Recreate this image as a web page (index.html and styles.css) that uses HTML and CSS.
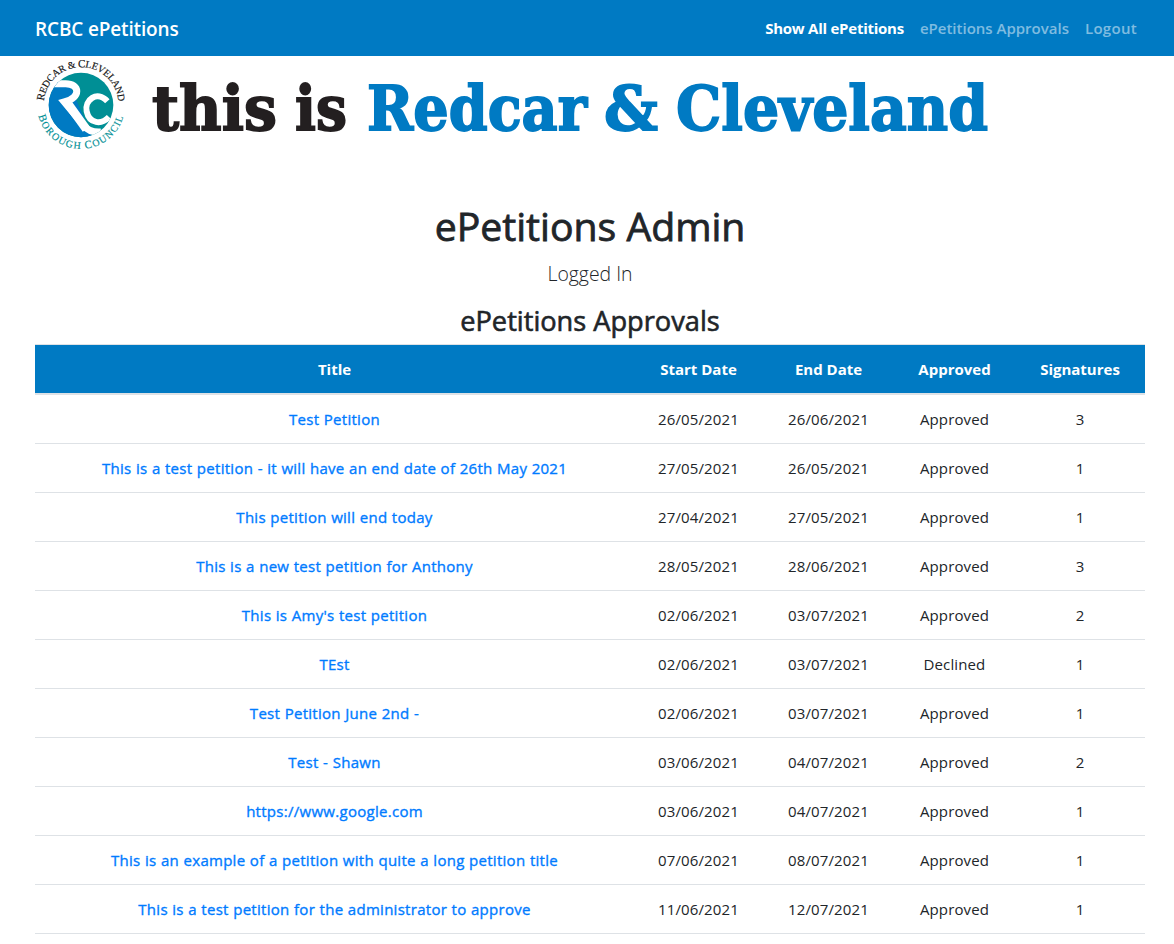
FILE: index.html
```html
<!DOCTYPE html>
<html lang="en">
<head>
<meta charset="utf-8">
<title>RCBC ePetitions</title>
<link rel="stylesheet" href="styles.css">
</head>
<body>
<nav class="navbar">
  <a class="brand">RCBC ePetitions</a>
  <div class="links"><a class="active">Show All ePetitions</a><a>ePetitions Approvals</a><a class="logout">Logout</a></div>
</nav>
<main class="container">
  <svg class="banner" width="960" height="100" viewBox="35 56 960 100" role="img" aria-label="this is Redcar &amp; Cleveland">
    <g transform="translate(25 50) scale(.33333)">
      <defs>
        <clipPath id="disc"><circle cx="168" cy="165" r="97"/></clipPath>
        <path id="arcTop" d="M57 153 A112 112 0 0 1 280 153 L283 190"/>
        <path id="arcBottom" d="M40 197 A132 132 0 0 0 296 197 L300 180"/>
      </defs>
      <g clip-path="url(#disc)">
        <rect x="70" y="60" width="200" height="210" fill="#008f95"/>
        <path d="M60 95 H130 L150 140 L205 270 H60Z" fill="#007ac3"/>
        <path d="M60 60 H125 Q95 72 84 92 H60Z" fill="#fff"/>
        <path d="M60 101 H122 C164 101 170 142 118 156 L176 226 Q194 249 228 246" fill="none" stroke="#fff" stroke-width="21"/>
        <path d="M126 157 L184 238" fill="none" stroke="#fff" stroke-width="26"/>
        <path d="M247 154 C216 120 178 150 185 184 C193 222 229 225 252 201" fill="none" stroke="#fff" stroke-width="18"/>
      </g>
      <text class="seal seal-top"><textPath href="#arcTop" textLength="332"><tspan class="cap">R</tspan>EDCAR &amp; <tspan class="cap">C</tspan>LEVELAND</textPath></text>
      <text class="seal seal-bottom"><textPath href="#arcBottom" textLength="345"><tspan class="cap">B</tspan>OROUGH <tspan class="cap">C</tspan>OUNCIL</textPath></text>
    </g>
    <g class="slogan">
      <text x="152" y="130" textLength="125" lengthAdjust="spacingAndGlyphs">this</text>
      <text x="295" y="130" textLength="52" lengthAdjust="spacingAndGlyphs">is</text>
      <g class="place">
        <text x="367" y="130" textLength="220" lengthAdjust="spacingAndGlyphs">Redcar</text>
        <text x="604" y="130" textLength="54" lengthAdjust="spacingAndGlyphs">&amp;</text>
        <text x="676" y="130" textLength="312" lengthAdjust="spacingAndGlyphs">Cleveland</text>
      </g>
    </g>
  </svg>
  <header class="heading">
    <h1>ePetitions Admin</h1>
    <p>Logged In</p>
    <h2>ePetitions Approvals</h2>
  </header>
  <table class="petitions">
    <colgroup><col class="c-title"><col class="c-start"><col class="c-end"><col class="c-approved"><col class="c-sign"></colgroup>
    <thead><tr><th>Title</th><th>Start Date</th><th>End Date</th><th>Approved</th><th>Signatures</th></tr></thead>
    <tbody>
      <tr><td><a>Test Petition</a></td><td>26/05/2021</td><td>26/06/2021</td><td>Approved</td><td>3</td></tr>
      <tr><td><a>This is a test petition - it will have an end date of 26th May 2021</a></td><td>27/05/2021</td><td>26/05/2021</td><td>Approved</td><td>1</td></tr>
      <tr><td><a>This petition will end today</a></td><td>27/04/2021</td><td>27/05/2021</td><td>Approved</td><td>1</td></tr>
      <tr><td><a>This is a new test petition for Anthony</a></td><td>28/05/2021</td><td>28/06/2021</td><td>Approved</td><td>3</td></tr>
      <tr><td><a>This is Amy's test petition</a></td><td>02/06/2021</td><td>03/07/2021</td><td>Approved</td><td>2</td></tr>
      <tr><td><a>TEst</a></td><td>02/06/2021</td><td>03/07/2021</td><td>Declined</td><td>1</td></tr>
      <tr><td><a>Test Petition June 2nd -</a></td><td>02/06/2021</td><td>03/07/2021</td><td>Approved</td><td>1</td></tr>
      <tr><td><a>Test - Shawn</a></td><td>03/06/2021</td><td>04/07/2021</td><td>Approved</td><td>2</td></tr>
      <tr><td><a>https://www.google.com</a></td><td>03/06/2021</td><td>04/07/2021</td><td>Approved</td><td>1</td></tr>
      <tr><td><a>This is an example of a petition with quite a long petition title</a></td><td>07/06/2021</td><td>08/07/2021</td><td>Approved</td><td>1</td></tr>
      <tr><td><a>This is a test petition for the administrator to approve</a></td><td>11/06/2021</td><td>12/07/2021</td><td>Approved</td><td>1</td></tr>
    </tbody>
  </table>
</main>
</body>
</html>
```
FILE: styles.css
```css
* { box-sizing: border-box; }
body { margin: 0; background: #fff; color: #212529; font: 15px/24px "Open Sans", "Noto Sans", sans-serif; overflow: hidden; }
.navbar { height: 56px; padding: 0 37px 0 35px; background: #007ac3; color: #fff; display: flex; align-items: center; justify-content: space-between; white-space: nowrap; }
.brand { font-size: 19px; font-weight: 600; letter-spacing: -.15px; padding-top: 1px; }
.links { display: flex; gap: 16px; font-weight: 600; color: rgba(255,255,255,.5); }
.links .active { color: #fff; font-weight: 700; letter-spacing: -.25px; }
.links .logout { letter-spacing: .3px; }
.container { padding: 0 29px 0 35px; }
.banner { display: block; overflow: visible; }
.seal { font-family: "Liberation Serif", serif; font-size: 30px; }
.cap { font-size: 33px; }
.seal-top { fill: #111; stroke: #111; stroke-width: .5px; }
.seal-bottom { fill: #008f95; stroke: #008f95; stroke-width: .5px; }
.slogan { font: bold 62px "DejaVu Serif", serif; fill: #231f20; stroke: #231f20; stroke-width: 1.8px; }
.place { fill: #007ac3; stroke: #007ac3; }
.heading { padding-top: 46px; text-align: center; height: 188px; }
h1 { margin: 0; font-size: 39.2px; line-height: 48px; font-weight: 400; -webkit-text-stroke: .8px #212529; }
p { margin: 8px 0 0; font-size: 19.4px; line-height: 31px; font-weight: 300; }
h2 { margin: 15px 0 0; font-size: 27.2px; line-height: 34px; font-weight: 400; -webkit-text-stroke: .6px #212529; }
.petitions { width: 1110px; table-layout: fixed; border-spacing: 0; text-align: center; white-space: nowrap; }
.c-title { width: 599px; }
.c-start { width: 129px; }
.c-end { width: 131px; }
.c-approved { width: 121px; }
.c-sign { width: 130px; }
th { height: 51px; padding: 0; background: #007ac3; color: #fff; border-top: 1px solid #dee2e6; border-bottom: 2px solid #dee2e6; font-weight: 700; }
td { height: 49px; padding: 0; border-bottom: 1px solid #dee2e6; }
td + td { letter-spacing: .12px; }
td a { color: #007bff; letter-spacing: .28px; word-spacing: .3px; -webkit-text-stroke: .35px #007bff; }
```
